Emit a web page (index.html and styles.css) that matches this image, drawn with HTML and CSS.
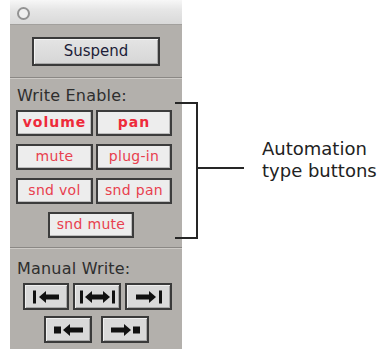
FILE: index.html
```html
<!DOCTYPE html>
<html>
<head>
<meta charset="utf-8">
<link rel="stylesheet" href="styles.css">
</head>
<body>
<div class="page">
  <div class="panel">
    <div class="titlebar"><span class="close"></span></div>
    <div class="sec sec-suspend">
      <div class="btn-suspend">Suspend</div>
    </div>
    <div class="sec sec-write">
      <div class="label">Write Enable:</div>
      <div class="grid">
        <div class="tbtn bold">volume</div>
        <div class="tbtn bold">pan</div>
        <div class="tbtn">mute</div>
        <div class="tbtn">plug-in</div>
        <div class="tbtn">snd vol</div>
        <div class="tbtn">snd pan</div>
        <div class="tbtn wide">snd mute</div>
      </div>
    </div>
    <div class="sec sec-manual">
      <div class="label">Manual Write:</div>
      <div class="mrow mrow1">
        <div class="mbtn w46">
          <svg width="26" height="14" viewBox="0 0 26 14"><rect x="0" y="0.5" width="3" height="13"/><polygon points="6,7 13,1 13,13"/><rect x="12" y="4.5" width="14" height="5"/></svg>
        </div>
        <div class="mbtn w48">
          <svg width="35" height="14" viewBox="0 0 35 14"><rect x="0" y="0.5" width="3" height="13"/><polygon points="5,7 12,1 12,13"/><rect x="11" y="4.5" width="13" height="5"/><polygon points="30,7 23,1 23,13"/><rect x="32" y="0.5" width="3" height="13"/></svg>
        </div>
        <div class="mbtn w47">
          <svg width="26" height="14" viewBox="0 0 26 14"><rect x="0" y="4.5" width="14" height="5"/><polygon points="20,7 13,1 13,13"/><rect x="23" y="0.5" width="3" height="13"/></svg>
        </div>
      </div>
      <div class="mrow mrow2">
        <div class="mbtn w48">
          <svg width="29" height="14" viewBox="0 0 29 14"><rect x="0" y="3.5" width="7" height="7"/><polygon points="9,7 16,1 16,13"/><rect x="15" y="4.5" width="14" height="5"/></svg>
        </div>
        <div class="mbtn w48">
          <svg width="29" height="14" viewBox="0 0 29 14"><rect x="0" y="4.5" width="14" height="5"/><polygon points="20,7 13,1 13,13"/><rect x="22" y="3.5" width="7" height="7"/></svg>
        </div>
      </div>
    </div>
  </div>
  <div class="bracket"></div>
  <div class="tick"></div>
  <div class="callout">Automation<br>type buttons</div>
</div>
</body>
</html>
```
FILE: styles.css
```css
html, body {
  margin: 0;
  padding: 0;
  background: #ffffff;
}
.page {
  position: relative;
  width: 378px;
  height: 349px;
  overflow: hidden;
  display: flex;
}
.panel {
  margin-left: 10px;
  width: 172px;
  height: 349px;
  background: #b3b0ac;
  display: flex;
  flex-direction: column;
  font-family: "DejaVu Sans", sans-serif;
}
.titlebar {
  height: 24px;
  border-bottom: 1px solid #a2a09d;
  background: linear-gradient(#f7f7f7, #e6e6e6 40%, #d9d9d9);
  display: flex;
  align-items: flex-start;
  padding-left: 7px;
}
.close {
  margin-top: 7px;
  width: 9px;
  height: 9px;
  border-radius: 50%;
  border: 2px solid #939393;
  background: #f0f0f0;
}
.sec-suspend {
  height: 52px;
  padding-top: 12px;
  box-sizing: border-box;
  display: flex;
  justify-content: center;
}
.btn-suspend {
  width: 128px;
  height: 29px;
  box-sizing: border-box;
  border: 2px solid #3a3a3a;
  background: linear-gradient(#e4e4e4, #d6d6d6);
  box-shadow: inset 1px 1px #f4f4f4, inset -1px -1px #a9a9a9;
  color: #1c1c38;
  font-size: 15px;
  line-height: 25px;
  text-align: center;
}
.sec-write, .sec-manual {
  border-top: 1px solid #8b8885;
  box-shadow: inset 0 1px #cdcac6;
}
.sec-write {
  padding: 8px 0 9px 6px;
}
.label {
  color: #2e2e2e;
  font-size: 16px;
  line-height: 20px;
  letter-spacing: 0.2px;
  margin-bottom: 4px;
  padding-left: 1px;
}
.grid {
  display: grid;
  grid-template-columns: 77px 76px;
  column-gap: 3px;
  row-gap: 8px;
}
.tbtn {
  height: 26px;
  box-sizing: border-box;
  border: 2px solid #3c3c3c;
  background: #ededed;
  box-shadow: inset -1px -1px #bdbdbd;
  color: #e8404e;
  font-size: 14px;
  line-height: 21px;
  text-align: center;
  letter-spacing: 0.3px;
}
.tbtn.bold {
  font-weight: bold;
  color: #ee2a3a;
  letter-spacing: 1px;
}
.tbtn.wide {
  width: 86px;
  margin-left: 32px;
}
.sec-manual {
  flex: 1;
  padding-top: 11px;
  padding-left: 6px;
}
.mrow {
  display: flex;
}
.mrow1 {
  padding-left: 7px;
  gap: 4px;
}
.mrow2 {
  margin-top: 6px;
  padding-left: 28px;
  gap: 9px;
}
.mbtn {
  height: 27px;
  box-sizing: border-box;
  border: 2px solid #3a3a3a;
  background: #d9d9d9;
  box-shadow: inset 1px 1px #f0f0f0, inset -1px -1px #a8a8a8;
  display: flex;
  align-items: center;
  justify-content: center;
}
.mbtn svg {
  fill: #111111;
}
.w46 { width: 46px; }
.w47 { width: 47px; }
.w48 { width: 48px; }
.bracket {
  position: absolute;
  left: 175px;
  top: 102px;
  width: 21px;
  height: 133px;
  border: 2px solid #262626;
  border-left: none;
}
.tick {
  position: absolute;
  left: 197px;
  top: 167px;
  width: 47px;
  height: 2px;
  background: #262626;
}
.callout {
  position: absolute;
  left: 262px;
  top: 138px;
  font-family: "DejaVu Sans", sans-serif;
  font-size: 18px;
  line-height: 22px;
  color: #222222;
}
```
